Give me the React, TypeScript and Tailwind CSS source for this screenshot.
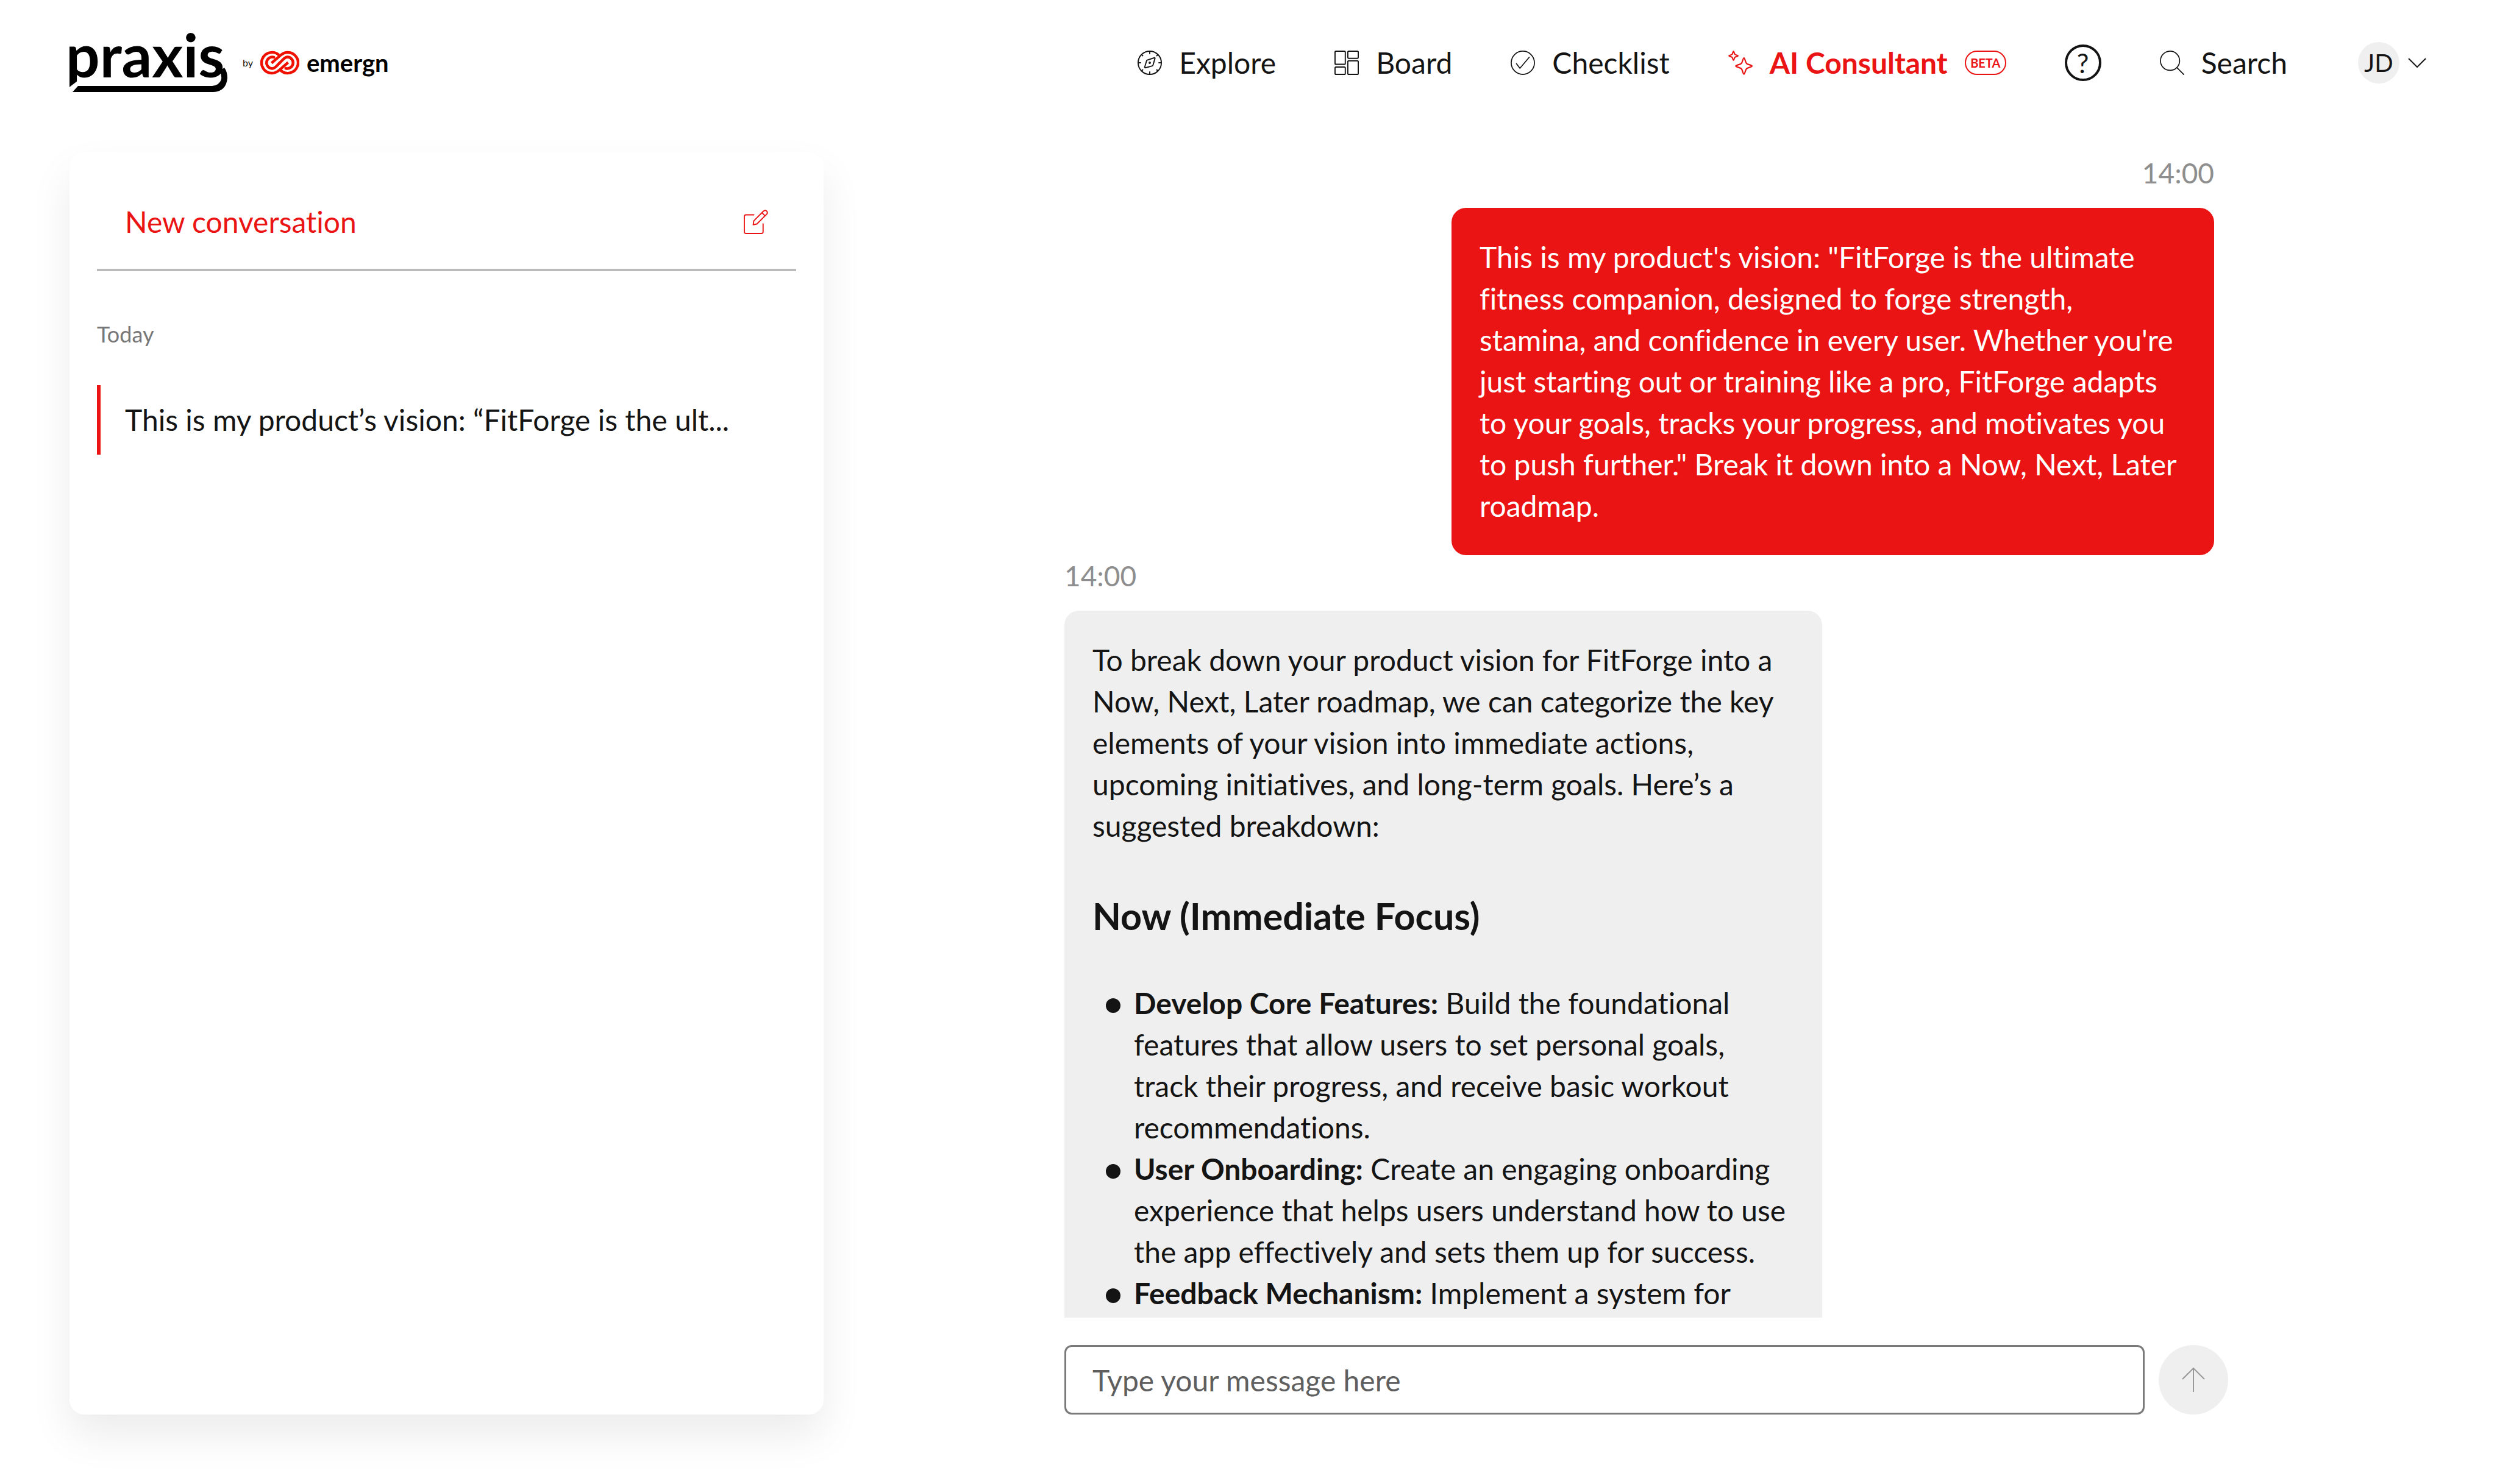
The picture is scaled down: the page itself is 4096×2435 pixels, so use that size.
import { useState } from 'react';
import type { ReactNode } from 'react';

const NOW_ITEMS = [
  {
    title: 'Develop Core Features:',
    body: 'Build the foundational features that allow users to set personal goals, track their progress, and receive basic workout recommendations.',
  },
  {
    title: 'User Onboarding:',
    body: 'Create an engaging onboarding experience that helps users understand how to use the app effectively and sets them up for success.',
  },
  {
    title: 'Feedback Mechanism:',
    body: 'Implement a system for',
  },
];

const STAR = 'M0 -42C5 -42 7 -20 13 -14C19 -7 42 -5 42 0C42 5 19 7 13 14C7 20 5 42 0 42C-5 42 -7 20 -13 14C-19 7 -42 5 -42 0C-42 -5 -19 -7 -13 -14C-7 -20 -5 -42 0 -42Z';

function CompassIcon() {
  return (
    <svg className="size-10" viewBox="0 0 126 126" fill="none" stroke="currentColor" strokeWidth="6" aria-hidden="true">
      <circle cx="63" cy="63" r="60" />
      {[0, 90, 180, 270].map(a => (
        <path key={a} d="M63 3v15" transform={`rotate(${a} 63 63)`} />
      ))}
      {[45, 135, 225, 315].map(a => (
        <path key={a} d="M63 3v11" transform={`rotate(${a} 63 63)`} />
      ))}
      <path d="M50 49L87 37Q91 37 90 41L80 75Q79 78 76 79L41 89Q36 89 37 85L47 52Q48 50 50 49Z" />
      <circle cx="63" cy="63" r="3" />
    </svg>
  );
}

function BoardIcon() {
  return (
    <svg className="size-10" viewBox="0 0 126 126" fill="none" stroke="currentColor" strokeWidth="6" aria-hidden="true">
      <rect x="3" y="3" width="53" height="68" rx="5" />
      <rect x="69" y="3" width="54" height="37" rx="5" />
      <rect x="3" y="85" width="53" height="38" rx="5" />
      <rect x="69" y="53" width="54" height="70" rx="5" />
    </svg>
  );
}

function ChecklistIcon() {
  return (
    <svg className="size-10" viewBox="0 0 42 42" fill="none" stroke="currentColor" strokeWidth="1.8" strokeLinecap="round" strokeLinejoin="round" aria-hidden="true">
      <circle cx="21" cy="21" r="20" />
      <path d="M10 22.5L16 30.5L32 11.5" />
    </svg>
  );
}

function SparklesIcon() {
  return (
    <svg className="size-10" viewBox="0 0 126 126" fill="none" stroke="currentColor" aria-hidden="true">
      <path d={STAR} transform="translate(27 27) scale(.56)" strokeWidth="12" />
      <path d={STAR} transform="translate(81 80)" strokeWidth="7" />
    </svg>
  );
}

function SearchIcon() {
  return (
    <svg className="size-10" viewBox="0 0 42 42" fill="none" stroke="currentColor" strokeWidth="1.8" strokeLinecap="round" aria-hidden="true">
      <circle cx="17.5" cy="17.5" r="16.5" />
      <path d="M29.5 29.5L41 41" />
    </svg>
  );
}

function EditIcon() {
  return (
    <svg className="size-10" viewBox="0 0 126 126" fill="none" stroke="currentColor" strokeWidth="6" strokeLinecap="round" strokeLinejoin="round" aria-hidden="true">
      <path d="M52 27H12Q3 27 3 36V114Q3 123 12 123H91Q100 123 100 114V73" />
      <path d="M52 58L102 8Q111 0 119 8Q126 16 118 24L68 74L49 78L52 58Z" />
      <path d="M94 16L110 32" />
    </svg>
  );
}

function PraxisLogo() {
  return (
    <svg className="h-25 w-[262px] overflow-visible" viewBox="-2 0 262 100" aria-label="praxis">
      <text x="-6" y="74" fontFamily="Lato, sans-serif" fontSize="98" fontWeight="700">
        praxis
      </text>
      {/* slanted cut under the p, then the underline that runs up into the s */}
      <path d="M-4 93L18 76V87L6 101H-4Z" fill="#fff" />
      <path d="M5 98L14 88H234Q246 87 249 77Q250 70 246 64L254 58Q259 65 259 75Q257 97 236 98Z" />
    </svg>
  );
}

function EmergnMark() {
  return (
    <svg className="h-10 w-16" viewBox="0 0 66 40" fill="none" stroke="#f01000" strokeWidth="4.6" strokeLinecap="round" aria-hidden="true">
      <path d="M32 7.4A17.6 17.6 0 1 0 20 37.6C25 37.6 29 35 32 32.5L47 19.5" strokeLinecap="butt" />
      <path d="M34 32.6A17.6 17.6 0 1 0 46 2.4C41 2.4 37 5 34 7.5L19 20.5" strokeLinecap="butt" />
      <path d="M23 10.7A9.7 9.7 0 1 0 20 29.7C25 29.7 27 25.5 33 20C39 14.5 41 10.3 46 10.3A9.7 9.7 0 1 1 43 29.3" />
    </svg>
  );
}

function NavLink({ icon, children }: { icon: ReactNode; children: ReactNode }) {
  return (
    <a href="#" className="flex items-center gap-7">
      {icon}
      {children}
    </a>
  );
}

function Header() {
  return (
    <header className="flex h-[206px] shrink-0 items-center justify-between pr-[116px] pl-28">
      <a href="#" className="flex items-center">
        <PraxisLogo />
        <span className="ml-6 text-[16px]">by</span>
        <span className="ml-3">
          <EmergnMark />
        </span>
        <span className="ml-3 text-[40px] leading-10 font-bold text-black">emergn</span>
      </a>

      <nav className="flex items-center gap-24">
        <NavLink icon={<CompassIcon />}>Explore</NavLink>
        <NavLink icon={<BoardIcon />}>Board</NavLink>
        <NavLink icon={<ChecklistIcon />}>Checklist</NavLink>
        <a href="#" className="flex items-center gap-7 font-bold text-[#eb1414]">
          <SparklesIcon />
          AI Consultant
          <span className="flex h-10 w-[68px] items-center justify-center rounded-full border-2 border-[#eb1414] text-[20px] leading-none">
            BETA
          </span>
        </a>
        <button type="button" aria-label="Help" className="flex size-15 items-center justify-center rounded-full border-4 border-[#141414] text-[44px] leading-none">
          ?
        </button>
        <NavLink icon={<SearchIcon />}>Search</NavLink>
        <button type="button" className="ml-5 flex items-center gap-3.5">
          <span className="flex size-17 items-center justify-center rounded-full bg-[#efefef] text-[40px]">JD</span>
          <svg className="h-4 w-[30px]" viewBox="0 0 30 16" fill="none" stroke="currentColor" strokeWidth="2" aria-hidden="true">
            <path d="M1 1L15 15L29 1" />
          </svg>
        </button>
      </nav>
    </header>
  );
}

function Sidebar() {
  return (
    <aside className="w-[1237px] shrink-0 rounded-3xl bg-white px-[45px] shadow-[0_34px_68px_rgba(0,0,0,0.08)]">
      <button type="button" className="flex h-[195px] w-full items-center justify-between border-b-4 border-[#bbb] px-[46px] pt-9 text-[#eb1414]">
        New conversation
        <EditIcon />
      </button>
      <h2 className="mt-[78px] text-[36px] leading-[50px] text-[#777]">Today</h2>
      <a href="#" className="mt-[59px] flex h-[114px] items-center border-l-6 border-[#eb1414] pl-10 whitespace-nowrap">
        This is my product’s vision: “FitForge is the ult...
      </a>
    </aside>
  );
}

function Chat() {
  const [message, setMessage] = useState('');

  return (
    <section className="flex min-w-0 flex-1 flex-col">
      <div className="flex min-h-0 flex-1 flex-col overflow-hidden pr-[23px]">
        {/* User message */}
        <time className="self-end text-[46px] text-[#8e8e8e]">14:00</time>
        <p className="mt-[23px] w-[1251px] shrink-0 self-end rounded-3xl bg-[#eb1414] py-[47px] pr-[49px] pl-[46px] text-white">
          This is my product's vision: "FitForge is the ultimate fitness companion, designed to forge strength, stamina,
          and confidence in every user. Whether you're just starting out or training like a pro, FitForge adapts to your
          goals, tracks your progress, and motivates you to push further." Break it down into a Now, Next, Later roadmap.
        </p>

        {/* Reply */}
        <time className="text-[46px] text-[#8e8e8e]">14:00</time>
        <article className="mt-[23px] w-[1243px] shrink-0 rounded-3xl bg-[#efefef] py-[47px] pr-[53px] pl-[46px]">
          <p>
            To break down your product vision for FitForge into a Now, Next, Later roadmap, we can categorize the key
            elements of your vision into immediate actions, upcoming initiatives, and long-term goals. Here’s a
            suggested breakdown:
          </p>
          <h3 className="mt-[72px] mb-[67px] text-[61px] leading-[84px] font-bold">Now (Immediate Focus)</h3>
          <ul className="pl-[68px]">
            {NOW_ITEMS.map(item => (
              <li key={item.title} className="relative">
                <span className="absolute top-[26px] -left-[46px] size-6 rounded-full bg-[#141414]" />
                <strong>{item.title}</strong> {item.body}
              </li>
            ))}
          </ul>
        </article>
      </div>

      {/* Composer */}
      <form className="mt-[45px] flex shrink-0 gap-[23px]" onSubmit={e => e.preventDefault()}>
        <input
          className="h-[114px] min-w-0 flex-1 rounded-xl border-3 border-[#7a7a7a] px-[43px] placeholder:text-[#5f5f5f]"
          placeholder="Type your message here"
          value={message}
          onChange={e => setMessage(e.target.value)}
          aria-label="Message"
        />
        <button type="submit" aria-label="Send" className="flex size-[114px] items-center justify-center rounded-full bg-[#efefef] text-[#999]">
          <svg className="h-10 w-[38px]" viewBox="0 0 38 40" fill="none" stroke="currentColor" strokeWidth="2" aria-hidden="true">
            <path d="M19 40V2M1 19L19 1L37 19" />
          </svg>
        </button>
      </form>
    </section>
  );
}

export default function App() {
  return (
    <div className="flex h-screen flex-col overflow-hidden bg-white font-['Lato',sans-serif] text-[48px] leading-[68px] text-[#141414] [font-variant-ligatures:none]">
      <Header />
      <main className="flex min-h-0 flex-1 gap-[395px] pt-[44px] pr-[441px] pb-[114px] pl-[114px]">
        <Sidebar />
        <Chat />
      </main>
    </div>
  );
}
